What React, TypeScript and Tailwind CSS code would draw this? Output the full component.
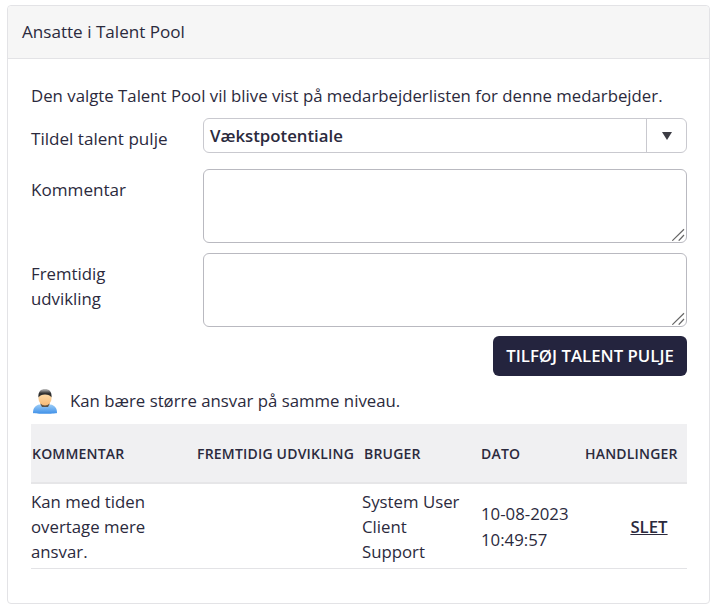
import { useState } from "react";

function UserIcon() {
  return (
    <svg width="24" height="26" viewBox="0 0 24 26" className="shrink-0">
      <defs>
        <linearGradient id="shirt" x1="0" y1="0" x2="0" y2="1">
          <stop offset="0" stopColor="#9ccdf7" />
          <stop offset="1" stopColor="#3f90e8" />
        </linearGradient>
        <linearGradient id="skin" x1="0" y1="0" x2="0" y2="1">
          <stop offset="0" stopColor="#fde0b0" />
          <stop offset="1" stopColor="#f7bb78" />
        </linearGradient>
        <linearGradient id="hair" x1="0" y1="0" x2="0" y2="1">
          <stop offset="0" stopColor="#c4c4c4" />
          <stop offset="0.5" stopColor="#333333" />
          <stop offset="1" stopColor="#222222" />
        </linearGradient>
      </defs>
      <path d="M0 25c0-5 2-7 6-8.500l6 1 6-1c4 1.500 6 3.500 6 8.500-3 1-21 1-24 0z" fill="url(#shirt)" />
      <path d="M7 15.500h10l-2 3.500H9z" fill="#5c5348" />
      <ellipse cx="12" cy="10.500" rx="6.500" ry="7" fill="url(#skin)" />
      <path d="M5.500 9.500C4.800 3.500 8 1 12 1s7.200 2.500 6.500 8.500C17.500 7.500 15 6.500 12 6.500S6.500 7.500 5.500 9.500z" fill="url(#hair)" />
    </svg>
  );
}

function TextArea() {
  return (
    <div className="relative h-[74px] w-[484px]">
      <textarea className="block h-full w-full resize-none rounded-md border border-[#b9b9c0] bg-white" />
      <svg width="13" height="13" viewBox="0 0 13 13" className="pointer-events-none absolute bottom-[2px] right-[2px]">
        <path d="M0.300 12.700L12 1.300M6.700 12.700L12 7" stroke="#666666" strokeWidth="1.200" fill="none" />
      </svg>
    </div>
  );
}

export default function App() {
  const [pool] = useState("Vækstpotentiale");

  return (
    <div className="bg-white min-h-[607px] px-[7px] pt-[5px] font-['Open_Sans',sans-serif] text-[16.8px] text-[#2b2a3d]">
      <div className="h-[599px] w-[703px] rounded border border-[#e3e3e6] bg-white">
        <div className="flex h-[53px] items-center border-b border-[#e3e3e6] bg-[#f6f6f6] px-[14px] rounded-t text-[17.1px]">
          Ansatte i Talent Pool
        </div>
        <div className="pl-[23px] pr-[22px] pt-[25px]">
          <p className="leading-[24px]">
            Den valgte Talent Pool vil blive vist på medarbejderlisten for denne medarbejder.
          </p>

          <div className="mt-[10px] flex">
            <label className="w-[172px] pt-[9px] leading-[24px] font-medium text-[17.1px]">Tildel talent pulje</label>
            <div className="flex h-[35px] w-[484px] items-center rounded-md border border-[#c9c9cf] bg-white">
              <div className="flex-1 pl-[6px] font-semibold">{pool}</div>
              <div className="flex h-full w-[40px] items-center justify-center border-l border-[#c9c9cf]">
                <svg width="10" height="8" viewBox="0 0 10 8">
                  <path d="M0 0h10L5 8z" fill="#3c3c44" />
                </svg>
              </div>
            </div>
          </div>

          <div className="mt-[16px] flex">
            <label className="w-[172px] pt-[8px] leading-[25px] font-medium text-[17.1px]">Kommentar</label>
            <TextArea />
          </div>

          <div className="mt-[10px] flex">
            <label className="w-[172px] pt-[8px] leading-[25px]">
              Fremtidig
              <br />
              udvikling
            </label>
            <TextArea />
          </div>

          <div className="mt-[9px] flex justify-end">
            <button className="h-[40px] w-[194px] rounded-md bg-[#24243e] text-[16.8px] font-semibold text-white">
              TILFØJ TALENT PULJE
            </button>
          </div>

          <div className="mt-[12px] flex h-[26px] items-center gap-[13px] pl-[2px]">
            <UserIcon />
            <span>Kan bære større ansvar på samme niveau.</span>
          </div>

          <table className="mt-[10px] w-[656px] table-fixed border-collapse">
            <thead>
              <tr className="h-[59px] border-b-[2px] border-[#e6e6e8] bg-[#f0f0f2] text-left text-[14px] tracking-[0.2px]">
                <th className="w-[166px] pl-px font-semibold">KOMMENTAR</th>
                <th className="w-[165px] font-semibold">FREMTIDIG UDVIKLING</th>
                <th className="w-[119px] pl-[2px] font-semibold">BRUGER</th>
                <th className="w-[104px] font-semibold">DATO</th>
                <th className="font-semibold">HANDLINGER</th>
              </tr>
            </thead>
            <tbody>
              <tr className="h-[85px] border-b border-[#e3e3e6] leading-[25px]">
                <td className="pt-[2px]">
                  Kan med tiden
                  <br />
                  overtage mere
                  <br />
                  ansvar.
                </td>
                <td />
                <td className="pt-[2px]">
                  System User
                  <br />
                  Client
                  <br />
                  Support
                </td>
                <td className="pt-[2px] leading-[26px]">
                  10-08-2023
                  <br />
                  10:49:57
                </td>
                <td className="pl-[26px] pt-[2px] text-center">
                  <a className="font-semibold underline" href="#">
                    SLET
                  </a>
                </td>
              </tr>
            </tbody>
          </table>
        </div>
      </div>
    </div>
  );
}
